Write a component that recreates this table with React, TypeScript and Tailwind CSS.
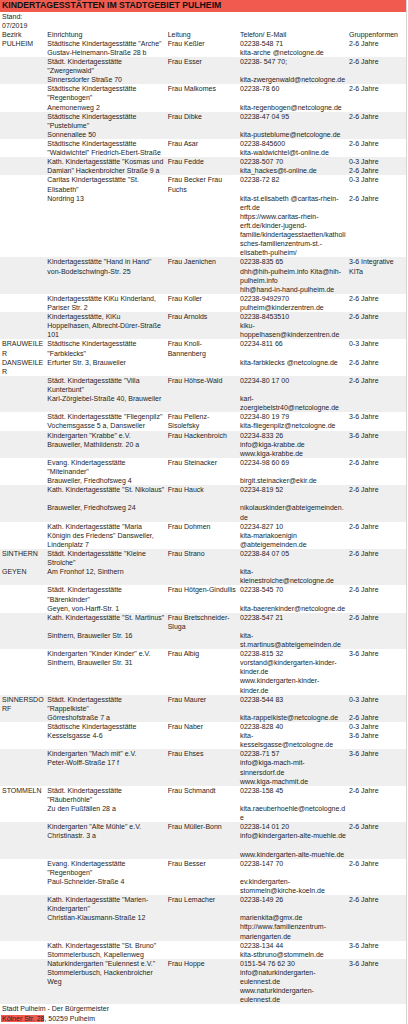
import React from "react";

type Row = { b?: string[]; e: string[]; l: string[]; t: string[]; g: string[] };

const rows: Row[] = [
  { b: ["PULHEIM"], e: ['Städtische Kindertagesstätte "Arche"', "Gustav-Heinemann-Straße 28 b"], l: ["Frau Keßler"], t: ["02238-548 71", "kita-arche @netcologne.de"], g: ["2-6 Jahre"] },
  { e: ["Städt. Kindertagesstätte", '"Zwergenwald"', "Sinnersdorfer Straße 70"], l: ["Frau Esser"], t: ["02238- 547 70;", "", "kita-zwergenwald@netcologne.de"], g: ["2-6 Jahre"] },
  { e: ["Städtische Kindertagesstätte", '"Regenbogen"', "Anemonenweg 2"], l: ["Frau Malkomes"], t: ["02238-78 60", "", "kita-regenbogen@netcologne.de"], g: ["2-6 Jahre"] },
  { e: ["Städtische Kindertagesstätte", '"Pusteblume"', "Sonnenallee 50"], l: ["Frau Dibke"], t: ["02238-47 04 95", "", "kita-pusteblume@netcologne.de"], g: ["2-6 Jahre"] },
  { e: ["Städtische Kindertagesstätte", '"Waldwichtel" Friedrich-Ebert-Straße'], l: ["Frau Asar"], t: ["02238-845600", "kita-waldwichtel@t-online.de"], g: ["2-6 Jahre"] },
  { e: ['Kath. Kindertagesstätte "Kosmas und', 'Damian" Hackenbroicher Straße 9 a'], l: ["Frau Fedde"], t: ["02238-507 70", "kita_hackes@t-online.de"], g: ["0-3 Jahre", "2-6 Jahre"] },
  { e: ['Caritas Kindertagesstätte "St.', 'Elisabeth"', "Nordring 13"], l: ["Frau Becker Frau", "Fuchs"], t: ["02238-72 82", "", "kita-st.elisabeth @caritas-rhein-", "erft.de", "https://www.caritas-rhein-", "erft.de/kinder-jugend-", "familie/kindertagesstaetten/katholi", "sches-familienzentrum-st.-", "elisabeth-pulheim/"], g: ["0-3 Jahre", "", "2-6 Jahre"] },
  { e: ['Kindertagesstätte "Hand in Hand"', "von-Bodelschwingh-Str. 25"], l: ["Frau Jaenichen"], t: ["02238-835 65", "dhh@hih-pulheim.info Kita@hih-", "pulheim.info", "hih@hand-in-hand-pulheim.de"], g: ["3-6 Integrative", "KITa"] },
  { e: ["Kindertagesstätte KiKu Kinderland,", "Pariser Str. 2"], l: ["Frau Koller"], t: ["02238-9492970", "pulheim@kinderzentren.de"], g: ["2-6 Jahre"] },
  { e: ["Kindertagesstätte, KiKu", "Hoppelhasen, Albrecht-Dürer-Straße", "101"], l: ["Frau Arnolds"], t: ["02238-8453510", "kiku-", "hoppelhasen@kinderzentren.de"], g: ["2-6 Jahre"] },
  { b: ["BRAUWEILE", "R", "DANSWEILE", "R"], e: ["Städtische Kindertagesstätte", '"Farbklecks"', "Erfurter Str. 3, Brauweiler"], l: ["Frau Knoll-", "Bannenberg"], t: ["02234-811 66", "", "kita-farbklecks @netcologne.de"], g: ["0-3 Jahre", "", "2-6 Jahre"] },
  { e: ['Städt. Kindertagesstätte "Villa', 'Kunterbunt"', "Karl-Zörgiebel-Straße 40, Brauweiler"], l: ["Frau Höhse-Wald"], t: ["02234-80 17 00", "", "karl-", "zoergiebelstr40@netcologne.de"], g: ["2-6 Jahre"] },
  { e: ['Städt. Kindertagesstätte "Fliegenpilz"', "Vochemsgasse 5 a, Dansweiler"], l: ["Frau Pellenz-", "Sisolefsky"], t: ["02234-80 19 79", "kita-fliegenpilz@netcologne.de"], g: ["3-6 Jahre"] },
  { e: ['Kindergarten "Krabbe" e.V.', "Brauweiler, Mathildenstr. 20 a"], l: ["Frau Hackenbroich"], t: ["02234-833 26", "info@kiga-krabbe.de", "www.kiga-krabbe.de"], g: ["3-6 Jahre"] },
  { e: ["Evang. Kindertagesstätte", '"Miteinander"', "Brauweiler, Friedhofsweg 4"], l: ["Frau Steinacker"], t: ["02234-98 60 69", "", "birgit.steinacker@ekir.de"], g: ["2-6 Jahre"] },
  { e: ['Kath. Kindertagesstätte "St. Nikolaus"', "", "Brauweiler, Friedhofsweg 24"], l: ["Frau Hauck"], t: ["02234-819 52", "", "nikolauskinder@abteigemeinden.", "de"], g: ["2-6 Jahre"] },
  { e: ['Kath. Kindertagesstätte "Maria', 'Königin des Friedens" Dansweiler,', "Lindenplatz 7"], l: ["Frau Dohmen"], t: ["02234-827 10", "kita-mariakoenigin", "@abteigemeinden.de"], g: ["2-6 Jahre"] },
  { b: ["SINTHERN", "", "GEYEN"], e: ['Städt. Kindertagesstätte "Kleine', 'Strolche"', "Am Fronhof 12, Sinthern"], l: ["Frau Strano"], t: ["02238-84 07 05", "", "kita-", "kleinestrolche@netcologne.de"], g: ["2-6 Jahre"] },
  { e: ["Städt. Kindertagesstätte", '"Bärenkinder"', "Geyen, von-Harff-Str. 1"], l: ["Frau Hötgen-Gindullis"], t: ["02238-545 70", "", "kita-baerenkinder@netcologne.de"], g: ["2-6 Jahre"] },
  { e: ['Kath. Kindertagesstätte "St. Martinus"', "", "Sinthern, Brauweiler Str. 16"], l: ["Frau Bretschneider-", "Sluga"], t: ["02238-547 21", "", "kita-", "st.martinus@abteigemeinden.de"], g: ["2-6 Jahre"] },
  { e: ['Kindergarten "Kinder Kinder" e.V.', "Sinthern, Brauweiler Str. 31"], l: ["Frau Albig"], t: ["02238-815 32", "vorstand@kindergarten-kinder-", "kinder.de", "www.kindergarten-kinder-", "kinder.de"], g: ["3-6 Jahre"] },
  { b: ["SINNERSDO", "RF"], e: ["Städt. Kindertagesstätte", '"Rappelkiste"', "Görreshofstraße 7 a"], l: ["Frau Maurer"], t: ["02238-544 83", "", "kita-rappelkiste@netcologne.de"], g: ["0-3 Jahre", "", "2-6 Jahre"] },
  { e: ["Städtische Kindertagesstätte", "Kesselsgasse 4-6"], l: ["Frau Naber"], t: ["02238-828 40", "kita-", "kesselsgasse@netcologne.de"], g: ["0-3 Jahre", "3-6 Jahre"] },
  { e: ['Kindergarten "Mach mit" e.V.', "Peter-Wolff-Straße 17 f"], l: ["Frau Ehses"], t: ["02238-71 57", "info@kiga-mach-mit-", "sinnersdorf.de", "www.kiga-machmit.de"], g: ["3-6 Jahre"] },
  { b: ["STOMMELN"], e: ["Städt. Kindertagesstätte", '"Räuberhöhle"', "Zu den Fußfällen 28 a"], l: ["Frau Schmandt"], t: ["02238-158 45", "", "kita.raeuberhoehle@netcologne.d", "e"], g: ["2-6 Jahre"] },
  { e: ['Kindergarten "Alte Mühle" e.V.', "Christinastr. 3 a"], l: ["Frau Müller-Bonn"], t: ["02238-14 01 20", "info@kindergarten-alte-muehle.de", "", "www.kindergarten-alte-muehle.de"], g: ["2-6 Jahre"] },
  { e: ["Evang. Kindertagesstätte", '"Regenbogen"', "Paul-Schneider-Straße 4"], l: ["Frau Besser"], t: ["02238-147 70", "", "ev.kindergarten-", "stommeln@kirche-koeln.de"], g: ["2-6 Jahre"] },
  { e: ['Kath. Kindertagesstätte "Marien-', 'Kindergarten"', "Christian-Klausmann-Straße 12"], l: ["Frau Lemacher"], t: ["02238-149 26", "", "marienkita@gmx.de", "http://www.familienzentrum-", "mariengarten.de"], g: ["2-6 Jahre"] },
  { e: ['Kath. Kindertagesstätte "St. Bruno"', "Stommelerbusch, Kapellenweg"], l: [], t: ["02238-134 44", "kita-stbruno@stommeln.de"], g: ["3-6 Jahre"] },
  { e: ['Naturkindergarten "Eulennest e.V."', "Stommelerbusch, Hackenbroicher", "Weg"], l: ["Frau Hoppe"], t: ["0151-54 76 62 30", "info@naturkindergarten-", "eulennest.de", "www.naturkindergarten-", "eulennest.de"], g: ["3-6 Jahre"] },
];

function Cell({ lines }: { lines: string[] }) {
  return (
    <div className="flex flex-col">
      {lines.map((s, i) => (
        <div key={i} className="h-[9.12px] leading-[9.12px] whitespace-nowrap">
          {s === "" ? "\u00a0" : s}
        </div>
      ))}
    </div>
  );
}

const grid = "grid grid-cols-[45.3px_120.4px_72.3px_109px_1fr] pl-[2px]";

export default function App() {
  return (
    <div
      className="w-[407px] min-h-[1024px] bg-white border-r border-[#d4d4d4] text-[7px] text-[#1e1e1e]"
      style={{ fontFamily: '"Liberation Sans", Arial, sans-serif' }}
    >
      <div className="h-[11.5px] bg-[#f05a4f] pl-[2px] flex items-center">
        <span className="text-[8.7px] font-bold leading-none text-[#111] whitespace-nowrap">
          KINDERTAGESSTÄTTEN IM STADTGEBIET PULHEIM
        </span>
      </div>
      <div className="pl-[2px]">
        <Cell lines={["Stand:", "07/2019"]} />
      </div>
      <div className={grid}>
        <Cell lines={["Bezirk"]} />
        <Cell lines={["Einrichtung"]} />
        <Cell lines={["Leitung"]} />
        <Cell lines={["Telefon/ E-Mail"]} />
        <Cell lines={["Gruppenformen"]} />
      </div>
      {rows.map((r, i) => (
        <div key={i} className={`${grid} ${i % 2 === 1 ? "bg-[#efefef]" : "bg-white"}`}>
          <Cell lines={r.b ?? []} />
          <Cell lines={r.e} />
          <Cell lines={r.l} />
          <Cell lines={r.t} />
          <Cell lines={r.g} />
        </div>
      ))}
      <div className="pl-[2px]">
        <div className="h-[9.12px] leading-[9.12px] whitespace-nowrap">Stadt Pulheim - Der Bürgermeister</div>
        <div className="h-[9.12px] leading-[9.12px] whitespace-nowrap">
          <span className="bg-[#f05a4f] -ml-[1px] pl-[1px]">Kölner Str. 28</span>, 50259 Pulheim
        </div>
      </div>
    </div>
  );
}
